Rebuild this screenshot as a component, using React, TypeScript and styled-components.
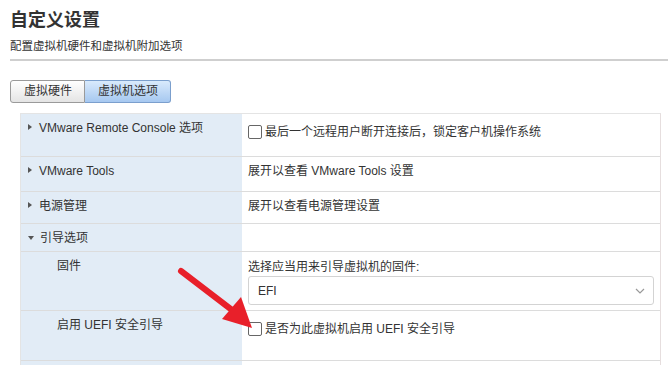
import * as React from 'react';
import styled, { createGlobalStyle } from 'styled-components';

const GlobalStyle = createGlobalStyle`
  body {
    margin: 0;
    background: #fff;
    font-family: "Liberation Sans", "Noto Sans CJK SC", sans-serif;
    color: #333;
    overflow: hidden;
  }
`;

const Page = styled.div`
  position: relative;
  padding: 8px 0 0 10px;
  height: 357px;
  overflow: hidden;
`;

const Title = styled.h1`
  margin: 0;
  font-size: 18px;
  line-height: 24px;
  font-weight: bold;
  color: #333;
`;

const Subtitle = styled.div`
  margin-top: 6px;
  font-size: 11.5px;
  line-height: 16px;
  color: #333;
`;

const Divider = styled.div`
  margin-top: 5px;
  border-top: 2px solid #cfcfcf;
`;

const Tabs = styled.div`
  display: flex;
  margin-top: 19px;
`;

const Tab = styled.div<{ $active?: boolean }>`
  height: 21px;
  line-height: 21px;
  padding: 0 12px 0 13px;
  font-size: 12px;
  color: #333;
  border: 1px solid ${p => (p.$active ? '#7b9fcd' : '#9a9a9a')};
  background: ${p =>
    p.$active
      ? 'linear-gradient(#d9eafc, #a6c8f0)'
      : 'linear-gradient(#ffffff, #e4e4e4)'};
  border-radius: ${p => (p.$active ? '0 3px 3px 0' : '3px 0 0 3px')};
  ${p => (p.$active ? 'border-left: none;' : '')}
`;

const Table = styled.div`
  margin: 10px 7px 0 10px;
  border-top: 1px solid #e4e4e4;
  border-right: 1px solid #e6dede;
  border-left: 1px solid #e4e4e4;
`;

const Row = styled.div<{ $h: number }>`
  display: grid;
  grid-template-columns: 221px 1fr;
  min-height: ${p => p.$h - 1}px;
  border-bottom: 1px solid #dcdcdc;
`;

const LabelCell = styled.div<{ $indent?: boolean }>`
  background: #e2ecf6;
  padding: 6px 6px 0 ${p => (p.$indent ? '36px' : '6px')};
  font-size: 12px;
  line-height: 16px;
  color: #333;
  display: flex;
  align-items: flex-start;
`;

const ValueCell = styled.div<{ $top?: number }>`
  padding: ${p => p.$top ?? 6}px 6px 0 6px;
  font-size: 12px;
  line-height: 16px;
  color: #333;
`;

const Caret = styled.span<{ $open?: boolean }>`
  display: inline-block;
  width: 0;
  height: 0;
  margin: ${p => (p.$open ? '6px 6px 0 1px' : '4px 7px 0 1px')};
  ${p =>
    p.$open
      ? 'border-left: 3.5px solid transparent; border-right: 3.5px solid transparent; border-top: 4px solid #555;'
      : 'border-top: 3.5px solid transparent; border-bottom: 3.5px solid transparent; border-left: 4px solid #555;'}
`;

const CheckLine = styled.label`
  display: flex;
  align-items: center;
  gap: 3px;
`;

const Box = styled.span`
  width: 12px;
  height: 12px;
  border: 1px solid #666;
  border-radius: 2px;
  background: #fff;
  flex: none;
`;

const Select = styled.div`
  margin-top: 1px;
  height: 27px;
  border: 1px solid #d3d3d3;
  border-radius: 3px;
  display: flex;
  align-items: center;
  justify-content: space-between;
  padding: 0 8px 0 9px;
  font-size: 12px;
  color: #333;
`;

const Arrow = styled.svg`
  position: absolute;
  left: 170px;
  top: 260px;
  pointer-events: none;
`;

const Chevron = () => (
  <svg width="10" height="6" viewBox="0 0 10 6">
    <path d="M1 1l4 4 4-4" fill="none" stroke="#999" strokeWidth="1.2" />
  </svg>
);

const App = () => (
  <Page>
    <GlobalStyle />
    <Title>自定义设置</Title>
    <Subtitle>配置虚拟机硬件和虚拟机附加选项</Subtitle>
    <Divider />
    <Tabs>
      <Tab>虚拟硬件</Tab>
      <Tab $active>虚拟机选项</Tab>
    </Tabs>
    <Table>
      <Row $h={43}>
        <LabelCell><Caret />VMware Remote Console 选项</LabelCell>
        <ValueCell $top={10}>
          <CheckLine><Box />最后一个远程用户断开连接后，锁定客户机操作系统</CheckLine>
        </ValueCell>
      </Row>
      <Row $h={35}>
        <LabelCell><Caret />VMware Tools</LabelCell>
        <ValueCell>展开以查看 VMware Tools 设置</ValueCell>
      </Row>
      <Row $h={32}>
        <LabelCell><Caret />电源管理</LabelCell>
        <ValueCell>展开以查看电源管理设置</ValueCell>
      </Row>
      <Row $h={28}>
        <LabelCell><Caret $open />引导选项</LabelCell>
        <ValueCell />
      </Row>
      <Row $h={59}>
        <LabelCell $indent>固件</LabelCell>
        <ValueCell $top={7}>
          选择应当用来引导虚拟机的固件:
          <Select>EFI<Chevron /></Select>
        </ValueCell>
      </Row>
      <Row $h={50}>
        <LabelCell $indent>启用 UEFI 安全引导</LabelCell>
        <ValueCell $top={10}>
          <CheckLine><Box />是否为此虚拟机启用 UEFI 安全引导</CheckLine>
        </ValueCell>
      </Row>
      <Row $h={30}>
        <LabelCell />
        <ValueCell />
      </Row>
    </Table>
    <Arrow width="100" height="80" viewBox="0 0 100 80">
      <line x1="11" y1="11" x2="62" y2="50" stroke="#e8202a" strokeWidth="6" strokeLinecap="round" />
      <polygon points="82,68 52,59 71,37" fill="#e8202a" />
    </Arrow>
  </Page>
);

export default App;
